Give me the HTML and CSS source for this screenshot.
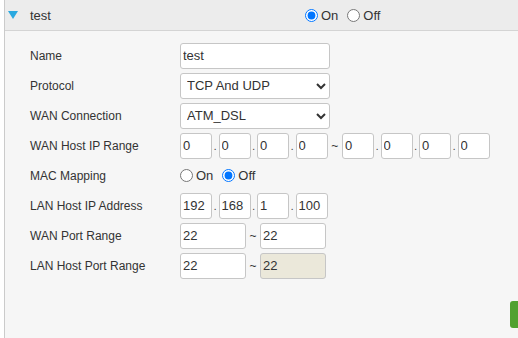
FILE: index.html
```html
<!DOCTYPE html>
<html lang="en">
<head>
    <meta charset="UTF-8">
    <meta name="viewport" content="width=device-width, initial-scale=1.0">
    <title>Port Mapping</title>
    <link rel="stylesheet" href="styles.css">
</head>
<body>
    <div class="panel">
        <div class="panel-head">
            <svg class="toggle" width="10" height="8" viewBox="0 0 10 8">
                <polygon points="0,0 10,0 5,8" fill="#2aa9e0"/>
            </svg>
            <span class="title">test</span>
            <div class="radios">
                <label class="radio"><input type="radio" name="enable" checked>On</label>
                <label class="radio"><input type="radio" name="enable">Off</label>
            </div>
        </div>

        <form class="panel-body">
            <div class="row">
                <label class="field-label" for="name">Name</label>
                <input type="text" id="name" class="text wide" value="test">
            </div>
            <div class="row">
                <label class="field-label" for="protocol">Protocol</label>
                <select id="protocol" class="wide">
                    <option>TCP And UDP</option>
                    <option>TCP</option>
                    <option>UDP</option>
                </select>
            </div>
            <div class="row">
                <label class="field-label" for="wan">WAN Connection</label>
                <select id="wan" class="wide">
                    <option>ATM_DSL</option>
                </select>
            </div>
            <div class="row">
                <span class="field-label">WAN Host IP Range</span>
                <div class="ip">
                    <input type="text" class="text octet" value="0"><span class="sep">.</span>
                    <input type="text" class="text octet" value="0"><span class="sep">.</span>
                    <input type="text" class="text octet" value="0"><span class="sep">.</span>
                    <input type="text" class="text octet" value="0"><span class="sep tilde">~</span>
                    <input type="text" class="text octet" value="0"><span class="sep">.</span>
                    <input type="text" class="text octet" value="0"><span class="sep">.</span>
                    <input type="text" class="text octet" value="0"><span class="sep">.</span>
                    <input type="text" class="text octet" value="0">
                </div>
            </div>
            <div class="row">
                <span class="field-label">MAC Mapping</span>
                <div class="radios">
                    <label class="radio"><input type="radio" name="mac">On</label>
                    <label class="radio"><input type="radio" name="mac" checked>Off</label>
                </div>
            </div>
            <div class="row">
                <span class="field-label">LAN Host IP Address</span>
                <div class="ip">
                    <input type="text" class="text octet" value="192"><span class="sep">.</span>
                    <input type="text" class="text octet" value="168"><span class="sep">.</span>
                    <input type="text" class="text octet" value="1"><span class="sep">.</span>
                    <input type="text" class="text octet" value="100">
                </div>
            </div>
            <div class="row">
                <span class="field-label">WAN Port Range</span>
                <div class="ip">
                    <input type="text" class="text port" value="22"><span class="sep port-sep">~</span>
                    <input type="text" class="text port" value="22">
                </div>
            </div>
            <div class="row">
                <span class="field-label">LAN Host Port Range</span>
                <div class="ip">
                    <input type="text" class="text port" value="22"><span class="sep port-sep">~</span>
                    <input type="text" class="text port" value="22" disabled>
                </div>
            </div>

            <div class="actions">
                <button type="button" class="btn-apply" aria-label="Apply"></button>
            </div>
        </form>
    </div>
</body>
</html>
```

FILE: styles.css
```css
body {
    margin: 0;
    background-color: #fff;
    font-family: "Liberation Sans", Arial, sans-serif;
    font-size: 12px;
    color: #333;
    overflow: hidden;
}
.panel {
    margin-left: 4px;
    width: 600px;
    border-left: 1px solid #cbcbcb;
    border-right: 1px solid #cbcbcb;
    background-color: #f6f6f6;
}
.panel-head {
    display: flex;
    align-items: center;
    height: 30px;
    background-color: #ececec;
    border-bottom: 1px solid #d4d4d4;
}
.toggle {
    margin-left: 3px;
    flex: none;
}
.title {
    width: 275px;
    margin-left: 12px;
    font-size: 13px;
}
.radios {
    display: flex;
    align-items: center;
}
.radio {
    display: flex;
    align-items: center;
    margin-right: 9px;
    font-size: 13px;
}
.radio input {
    margin: 0 3px 0 0;
    width: 13px;
    height: 13px;
}
.panel-body {
    padding: 12px 0 20px 0;
}
.row {
    display: flex;
    align-items: center;
    height: 25px;
    margin-bottom: 5px;
}
.field-label {
    width: 150px;
    padding-left: 25px;
    flex: none;
}
.text {
    box-sizing: border-box;
    height: 26px;
    padding: 0 2px;
    border: 1px solid #c6c6c6;
    border-radius: 3px;
    background-color: #fff;
    font-family: inherit;
    font-size: 13px;
    color: #333;
}
.text:disabled {
    background-color: #ebe8da;
}
.wide {
    width: 150px;
}
select {
    box-sizing: border-box;
    height: 26px;
    padding: 0 2px;
    border: 1px solid #c6c6c6;
    border-radius: 3px;
    background-color: #fff;
    font-family: inherit;
    font-size: 13px;
    color: #333;
}
.ip {
    display: flex;
    align-items: baseline;
}
.octet {
    width: 32px;
}
.port {
    width: 66px;
}
.sep {
    width: 6.5px;
    text-align: center;
    font-size: 10px;
}
.tilde {
    width: 14.5px;
    font-size: 12px;
}
.port-sep {
    width: 14px;
    font-size: 12px;
}
.actions {
    display: flex;
    justify-content: flex-end;
    margin-top: 23px;
}
.btn-apply {
    width: 80px;
    height: 27px;
    margin-right: 15px;
    border: none;
    border-radius: 3px;
    background-color: #52a130;
}
```
